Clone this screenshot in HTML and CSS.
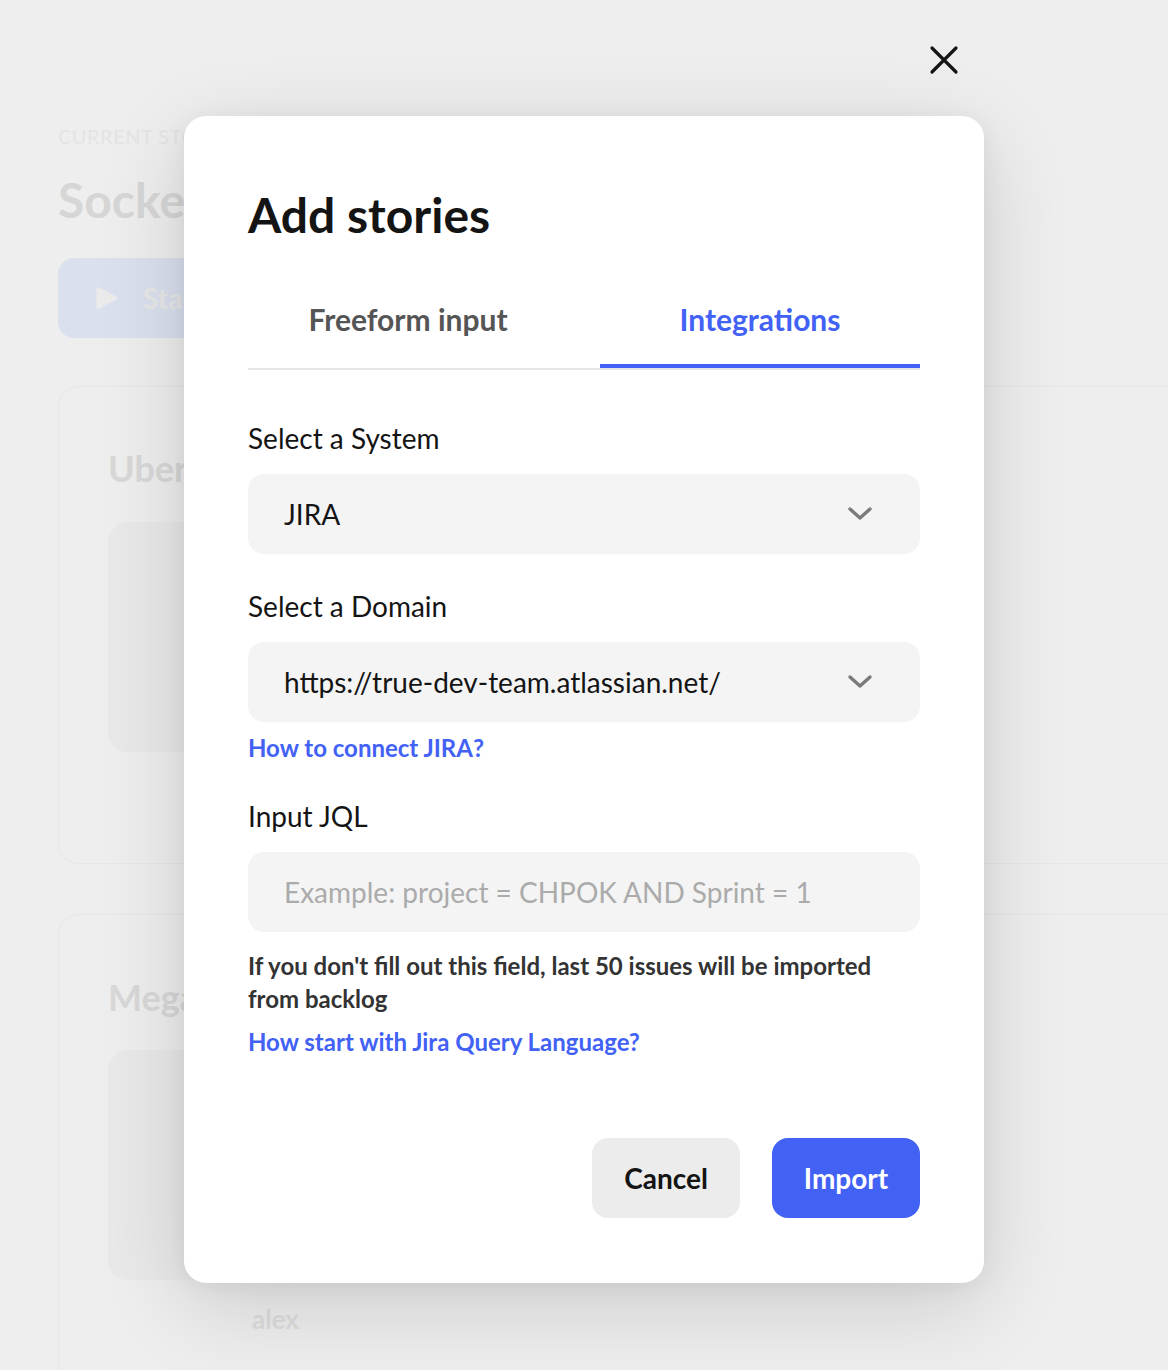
FILE: index.html
```html
<!DOCTYPE html>
<html lang="en">
<head>
<meta charset="utf-8">
<title>Add stories</title>
<link rel="stylesheet" href="styles.css">
</head>
<body>
<div class="page">
  <div class="eyebrow">CURRENT STORY</div>
  <div class="page-title">Socket.io</div>
  <div class="start-btn">
    <svg class="play" width="24" height="26" viewBox="0 0 24 26"><path d="M3 3.5 L21 13 L3 22.5 Z" fill="#ebebeb" stroke="#ebebeb" stroke-width="3" stroke-linejoin="round"/></svg>
    <span>Start</span>
  </div>
  <div class="card">
    <div class="card-title">Uber</div>
    <div class="card-box"></div>
  </div>
  <div class="card second">
    <div class="card-title">Mega</div>
    <div class="card-box tall"></div>
    <div class="card-user">alex</div>
  </div>
</div>

<button class="close" aria-label="Close">
  <svg width="30" height="30" viewBox="0 0 30 30"><path d="M3 3 L27 27 M27 3 L3 27" stroke="#151515" stroke-width="3.2" stroke-linecap="round"/></svg>
</button>

<div class="modal">
  <h2 class="modal-title">Add stories</h2>
  <div class="tabs">
    <div class="tab">Freeform input</div>
    <div class="tab active">Integrations</div>
  </div>

  <div class="label first">Select a System</div>
  <div class="select">
    <span>JIRA</span>
    <svg class="chev" width="26" height="16" viewBox="0 0 26 16"><path d="M3 3 L13 12 L23 3" fill="none" stroke="#7a7a7a" stroke-width="3.4" stroke-linecap="round" stroke-linejoin="round"/></svg>
  </div>

  <div class="label">Select a Domain</div>
  <div class="select">
    <span>https://true-dev-team.atlassian.net/</span>
    <svg class="chev" width="26" height="16" viewBox="0 0 26 16"><path d="M3 3 L13 12 L23 3" fill="none" stroke="#7a7a7a" stroke-width="3.4" stroke-linecap="round" stroke-linejoin="round"/></svg>
  </div>
  <a class="link small-gap" href="#">How to connect JIRA?</a>

  <div class="label jql">Input JQL</div>
  <div class="input">Example: project = CHPOK AND Sprint = 1</div>
  <p class="help">If you don't fill out this field, last 50 issues will be imported from backlog</p>
  <a class="link" href="#">How start with Jira Query Language?</a>

  <div class="actions">
    <button class="btn cancel">Cancel</button>
    <button class="btn import">Import</button>
  </div>
</div>
</body>
</html>
```

FILE: styles.css
```css
* { box-sizing: border-box; }

html, body {
  margin: 0;
  height: 1370px;
  overflow: hidden;
}

body {
  background: #eeeeee;
  font-family: Lato, "Open Sans", "Liberation Sans", sans-serif;
  position: relative;
}

/* ---------- faded background page ---------- */
.page {
  padding: 120px 0 0 58px;
}

.eyebrow {
  font-size: 20px;
  line-height: 32px;
  color: #e4e4e4;
  letter-spacing: 0.5px;
}

.page-title {
  margin-top: 20px;
  font-size: 48px;
  line-height: 56px;
  font-weight: 700;
  color: #d6d6d6;
}

.start-btn {
  margin-top: 30px;
  width: 260px;
  height: 80px;
  border-radius: 16px;
  background: #dbe0ef;
  display: flex;
  align-items: center;
  padding-left: 37px;
  gap: 24px;
  font-size: 28px;
  font-weight: 700;
  color: #e8e8e8;
}

.card {
  margin-top: 48px;
  width: 1200px;
  border: 1px solid #e7e7e7;
  border-radius: 20px;
  padding: 59px 49px 111px;
}

.card.second {
  margin-top: 50px;
  padding-top: 60px;
  padding-bottom: 200px;
}

.card-title {
  font-size: 36px;
  line-height: 44px;
  font-weight: 700;
  color: #d8d8d8;
}

.card-box {
  margin-top: 32px;
  width: 600px;
  height: 230px;
  border-radius: 20px;
  background: #e9e9e9;
}

.card-box.tall {
  margin-top: 31px;
}

.card-user {
  margin: 22px 0 0 144px;
  font-size: 26px;
  line-height: 34px;
  font-weight: 700;
  color: #dddddd;
}

/* ---------- close button ---------- */
.close {
  position: absolute;
  left: 929px;
  top: 45px;
  width: 30px;
  height: 30px;
  padding: 0;
  border: 0;
  background: none;
  display: flex;
}

/* ---------- modal ---------- */
.modal {
  position: absolute;
  left: 184px;
  top: 116px;
  width: 800px;
  padding: 64px 64px 65px;
  background: #ffffff;
  border-radius: 22px;
  box-shadow: 0 24px 90px rgba(0, 0, 0, 0.14), 0 4px 24px rgba(0, 0, 0, 0.06);
  display: flex;
  flex-direction: column;
  align-items: flex-start;
}

.modal-title {
  margin: 0;
  font-size: 48px;
  line-height: 70px;
  font-weight: 700;
  color: #141414;
}

.tabs {
  margin-top: 20px;
  width: 100%;
  display: flex;
  gap: 32px;
  border-bottom: 2px solid #e6e6e6;
}

.tab {
  flex: 1;
  height: 98px;
  display: flex;
  align-items: center;
  justify-content: center;
  font-size: 30px;
  font-weight: 700;
  color: #555555;
}

.tab.active {
  color: #4261f5;
  box-shadow: inset 0 -4px 0 #4261f5;
}

.label {
  margin-top: 36px;
  font-size: 28px;
  line-height: 32px;
  color: #141414;
}

.label.first { margin-top: 52px; }
.label.jql { margin-top: 38px; }

.select,
.input {
  margin-top: 20px;
  width: 100%;
  height: 80px;
  border-radius: 16px;
  background: #f4f4f4;
  display: flex;
  align-items: center;
  justify-content: space-between;
  padding: 0 47px 0 36px;
  font-size: 28px;
  color: #141414;
}

.input {
  color: #ababab;
}

.chev {
  display: block;
}

.link {
  margin-top: 36px;
  font-size: 24px;
  line-height: 28px;
  font-weight: 700;
  color: #4261f5;
  text-decoration: none;
}

.link.small-gap {
  margin-top: 12px;
}

.help {
  margin: 17px 0 0;
  font-size: 24px;
  line-height: 33px;
  font-weight: 700;
  color: #333333;
}

.help + .link {
  margin-top: 13px;
}

.actions {
  margin-top: 82px;
  width: 100%;
  display: flex;
  justify-content: flex-end;
  gap: 32px;
}

.btn {
  width: 148px;
  height: 80px;
  border: 0;
  border-radius: 16px;
  font-family: inherit;
  font-size: 28px;
  font-weight: 700;
  padding: 0;
}

.btn.cancel {
  background: #ececec;
  color: #141414;
}

.btn.import {
  background: #4261f5;
  color: #ffffff;
}
```
